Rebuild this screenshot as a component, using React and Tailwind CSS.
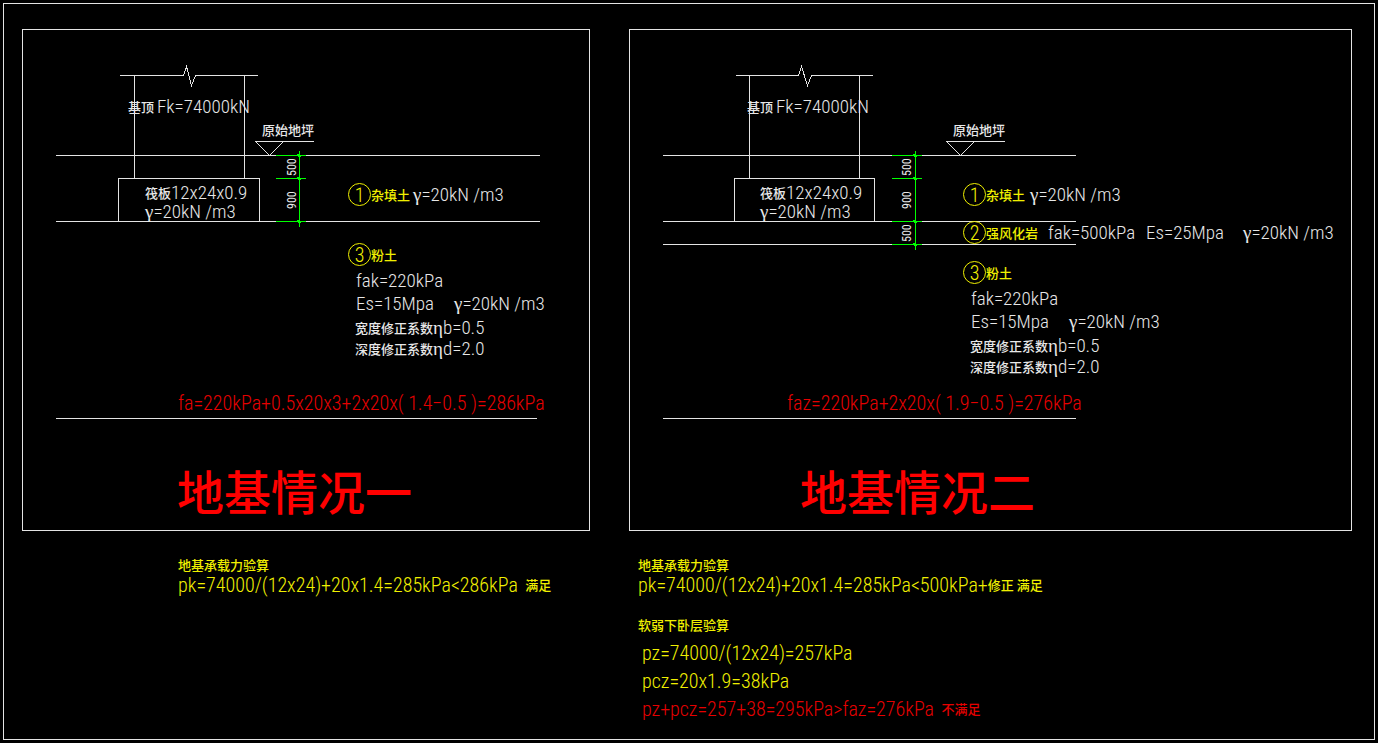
const latin = 'font-["Roboto_Condensed","Liberation_Sans_Narrow","Roboto",sans-serif] font-light';
const han = 'font-["Noto_Sans_CJK_SC",sans-serif] text-[13px] font-medium';

function Latin({ children }) {
  return <span className={`text-[19px] ${latin}`}>{children}</span>;
}

function Formula({ children }) {
  return <span className={`text-[20px] ${latin}`}>{children}</span>;
}

function Greek({ children }) {
  return <span className={'font-["Liberation_Serif",serif] text-[19px] font-normal'}>{children}</span>;
}

function Han({ children }) {
  return <span className={han}>{children}</span>;
}

function UnitWeight() {
  return (
    <Latin>
      <Greek>γ</Greek>=20kN /m3
    </Latin>
  );
}

function Row({ className = '', children }) {
  return <p className={`flex h-5 items-center whitespace-pre leading-5 ${className}`}>{children}</p>;
}

function Note({ className, children }) {
  return <Row className={`absolute ${className}`}>{children}</Row>;
}

function Layer({ className, number, name }) {
  return (
    <div className={`absolute flex h-[23px] items-center text-[#f0f000] ${className}`}>
      <span className={`flex size-[23px] items-center justify-center rounded-full border border-[#f0f000] text-[20px] leading-5 ${latin}`}>
        {number}
      </span>
      <Han>{name}</Han>
    </div>
  );
}

function Dimension({ className, children }) {
  return (
    <span
      className={`absolute flex w-3 rotate-180 items-center justify-center font-["Roboto_Condensed","Liberation_Sans_Narrow","Roboto",sans-serif] text-[12px] leading-3 [writing-mode:vertical-rl] ${className}`}
    >
      {children}
    </span>
  );
}

function DimensionLine({ x, levels }) {
  const first = levels[0];
  const last = levels[levels.length - 1];
  return (
    <g stroke="#00ff00">
      <path d={`M${x} ${first - 5}V${last + 5}`} />
      {levels.map((y) => (
        <g key={y}>
          <path d={`M${x - 24} ${y}H${x + 6}`} />
          <path d={`M${x - 2} ${y - 1}L${x + 1} ${y + 2}`} strokeWidth="2" />
        </g>
      ))}
    </g>
  );
}

function Panel({ title, titleClass, drawing, viewBox, drawingClass, children }) {
  return (
    <section className="relative h-[502px] border border-[#e4e4e4]">
      <svg className={`block ${drawingClass}`} viewBox={viewBox} fill="none" stroke="#e4e4e4" shapeRendering="crispEdges" aria-hidden="true">
        <g transform="translate(.5 .5)">{drawing}</g>
      </svg>
      {children}
      <h2 className={`absolute whitespace-nowrap font-["Noto_Sans_CJK_SC",sans-serif] text-[47px] leading-[62px] font-medium text-[#ff0000] ${titleClass}`}>
        {title}
      </h2>
    </section>
  );
}

function CaseOne() {
  return (
    <Panel
      title="地基情况一"
      titleClass="left-[154px] top-[429px]"
      viewBox="23 30 566 500"
      drawingClass="h-[500px] w-[566px]"
      drawing={
        <>
          <path d="M119 75H183L186 66L191 85L195 75H257" />
          <path d="M134 75V178M244 75V178M118 178H259V221H118Z" />
          <path d="M55 155H539M55 221H539M55 418H536" />
          <path d="M313 141H255L269 155L283 141" />
          <DimensionLine x={299} levels={[155, 178, 221]} />
        </>
      }
    >
      <Note className="left-[105px] top-[67px]"><Han>基顶 </Han><Latin>Fk=74000kN</Latin></Note>
      <Note className="left-[239px] top-[90px]"><Han>原始地坪</Han></Note>
      <Note className="left-[122px] top-[153px]"><Han>筏板</Han><Latin>12x24x0.9</Latin></Note>
      <Note className="left-[122px] top-[172px]"><UnitWeight /></Note>
      <Dimension className="left-[263px] top-[126px] h-[22px]">500</Dimension>
      <Dimension className="left-[263px] top-[159px] h-[22px]">900</Dimension>
      <Layer className="left-[325px] top-[153px]" number="1" name="杂填土" />
      <Note className="left-[390px] top-[155px]"><UnitWeight /></Note>
      <Layer className="left-[325px] top-[213px]" number="3" name="粉土" />
      <Note className="left-[333px] top-[241px]"><Latin>fak=220kPa</Latin></Note>
      <Note className="left-[333px] top-[264px] gap-5"><Latin>Es=15Mpa</Latin><UnitWeight /></Note>
      <Note className="left-[332px] top-[288px]"><Han>宽度修正系数</Han><Latin><Greek>η</Greek>b=0.5</Latin></Note>
      <Note className="left-[332px] top-[309px]"><Han>深度修正系数</Han><Latin><Greek>η</Greek>d=2.0</Latin></Note>
      <Note className="left-[155px] top-[363px] text-[#e60000]"><Formula>fa=220kPa+0.5x20x3+2x20x( 1.4−0.5 )=286kPa</Formula></Note>
    </Panel>
  );
}

function CaseTwo() {
  return (
    <Panel
      title="地基情况二"
      titleClass="left-[170px] top-[429px]"
      viewBox="630 30 721 500"
      drawingClass="h-[500px] w-[721px]"
      drawing={
        <>
          <path d="M735 75H798L801 66L807 85L811 75H872" />
          <path d="M749 75V178M859 75V178M734 178H874V221H734Z" />
          <path d="M662 155H1075M662 221H1075M662 244H1075M662 418H1075" />
          <path d="M1004 141H946L960 155L974 141" />
          <DimensionLine x={915} levels={[155, 178, 221, 244]} />
        </>
      }
    >
      <Note className="left-[117px] top-[67px]"><Han>基顶 </Han><Latin>Fk=74000kN</Latin></Note>
      <Note className="left-[323px] top-[90px]"><Han>原始地坪</Han></Note>
      <Note className="left-[130px] top-[153px]"><Han>筏板</Han><Latin>12x24x0.9</Latin></Note>
      <Note className="left-[130px] top-[172px]"><UnitWeight /></Note>
      <Dimension className="left-[271px] top-[126px] h-[22px]">500</Dimension>
      <Dimension className="left-[271px] top-[159px] h-[22px]">900</Dimension>
      <Dimension className="left-[271px] top-[192px] h-[22px]">500</Dimension>
      <Layer className="left-[333px] top-[153px]" number="1" name="杂填土" />
      <Note className="left-[400px] top-[155px]"><UnitWeight /></Note>
      <Layer className="left-[333px] top-[191px]" number="2" name="强风化岩" />
      <Note className="left-[418px] top-[193px]"><Latin>fak=500kPa</Latin></Note>
      <Note className="left-[516px] top-[193px]"><Latin>Es=25Mpa</Latin></Note>
      <Note className="left-[613px] top-[193px]"><UnitWeight /></Note>
      <Layer className="left-[333px] top-[231px]" number="3" name="粉土" />
      <Note className="left-[341px] top-[259px]"><Latin>fak=220kPa</Latin></Note>
      <Note className="left-[341px] top-[282px] gap-5"><Latin>Es=15Mpa</Latin><UnitWeight /></Note>
      <Note className="left-[340px] top-[306px]"><Han>宽度修正系数</Han><Latin><Greek>η</Greek>b=0.5</Latin></Note>
      <Note className="left-[340px] top-[327px]"><Han>深度修正系数</Han><Latin><Greek>η</Greek>d=2.0</Latin></Note>
      <Note className="left-[157px] top-[363px] text-[#e60000]"><Formula>faz=220kPa+2x20x( 1.9−0.5 )=276kPa</Formula></Note>
    </Panel>
  );
}

export default function App() {
  return (
    <div className="flex min-h-screen bg-black p-[3px] text-[#e8e8e8]">
      <main className="grid flex-1 grid-cols-[568fr_723fr] content-start gap-x-[39px] gap-y-6 border border-[#e4e4e4] pt-[25px] pr-[22px] pb-5 pl-[18px]">
        <CaseOne />
        <CaseTwo />
        <section className="pl-[156px] text-[#f0f000]">
          <Row><Han>地基承载力验算</Han></Row>
          <Row><Formula>pk=74000/(12x24)+20x1.4=285kPa&lt;286kPa </Formula><Han> 满足</Han></Row>
        </section>
        <section className="pl-[9px] text-[#f0f000]">
          <Row><Han>地基承载力验算</Han></Row>
          <Row><Formula>pk=74000/(12x24)+20x1.4=285kPa&lt;500kPa+</Formula><Han>修正 满足</Han></Row>
          <Row className="mt-5"><Han>软弱下卧层验算</Han></Row>
          <div className="mt-2 flex flex-col gap-2 pl-1">
            <Row><Formula>pz=74000/(12x24)=257kPa</Formula></Row>
            <Row><Formula>pcz=20x1.9=38kPa</Formula></Row>
            <Row className="text-[#e60000]"><Formula>pz+pcz=257+38=295kPa&gt;faz=276kPa </Formula><Han> 不满足</Han></Row>
          </div>
        </section>
      </main>
    </div>
  );
}
